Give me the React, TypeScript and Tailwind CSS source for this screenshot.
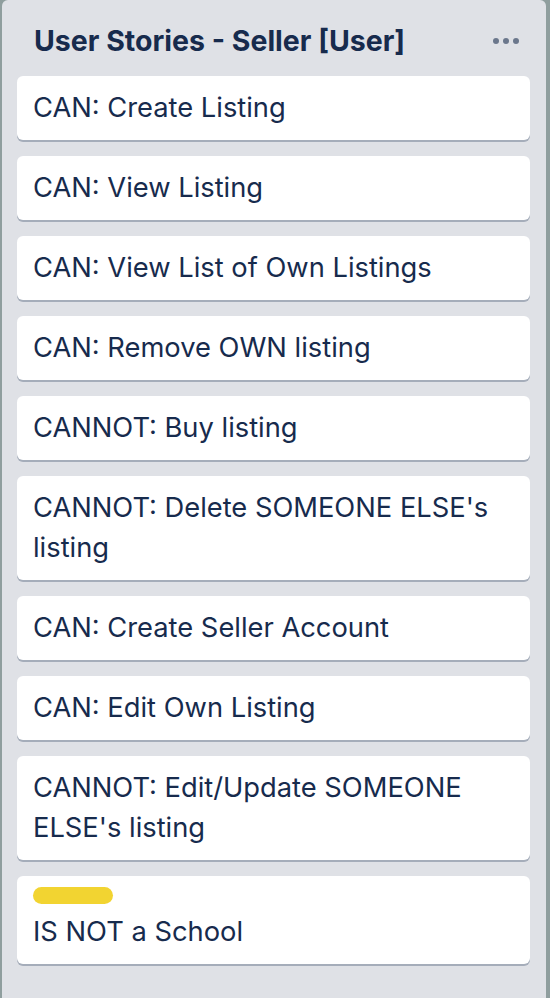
const cards: { text: string; label?: boolean }[] = [
  { text: 'CAN: Create Listing' },
  { text: 'CAN: View Listing' },
  { text: 'CAN: View List of Own Listings' },
  { text: 'CAN: Remove OWN listing' },
  { text: 'CANNOT: Buy listing' },
  { text: "CANNOT: Delete SOMEONE ELSE's listing" },
  { text: 'CAN: Create Seller Account' },
  { text: 'CAN: Edit Own Listing' },
  { text: "CANNOT: Edit/Update SOMEONE ELSE's listing" },
  { text: 'IS NOT a School', label: true },
];

export default function App() {
  return (
    <div
      className="w-[550px] h-[998px] bg-[#8f9e9e] pl-[2px] pr-[4px] overflow-hidden"
      style={{ fontFamily: 'Inter, "Noto Sans", sans-serif' }}
    >
      <div className="h-full bg-[#dfe1e6] rounded-t-[6px] pl-[15px] pr-[16px]">
        <div className="h-[76px] flex items-center justify-between pl-[17px] pr-[11px] pt-[6px]">
          <h2 className="text-[28.5px] font-bold text-[#172b4d]">
            User Stories - Seller [User]
          </h2>
          <div className="flex gap-[4px]">
            <span className="w-[6px] h-[6px] rounded-full bg-[#6b778c]" />
            <span className="w-[6px] h-[6px] rounded-full bg-[#6b778c]" />
            <span className="w-[6px] h-[6px] rounded-full bg-[#6b778c]" />
          </div>
        </div>
        <div className="flex flex-col gap-[16px]">
          {cards.map((c) => (
            <div
              key={c.text}
              className="bg-white rounded-[6px] shadow-[0_2px_0_#a5adba] px-[16px] py-[12px] text-[27.3px] leading-[40px] text-[#172b4d]"
            >
              {c.label && (
                <div className="w-[80px] h-[17px] rounded-full bg-[#f2d431] mt-[-1px] mb-[8px]" />
              )}
              {c.text}
            </div>
          ))}
        </div>
      </div>
    </div>
  );
}
